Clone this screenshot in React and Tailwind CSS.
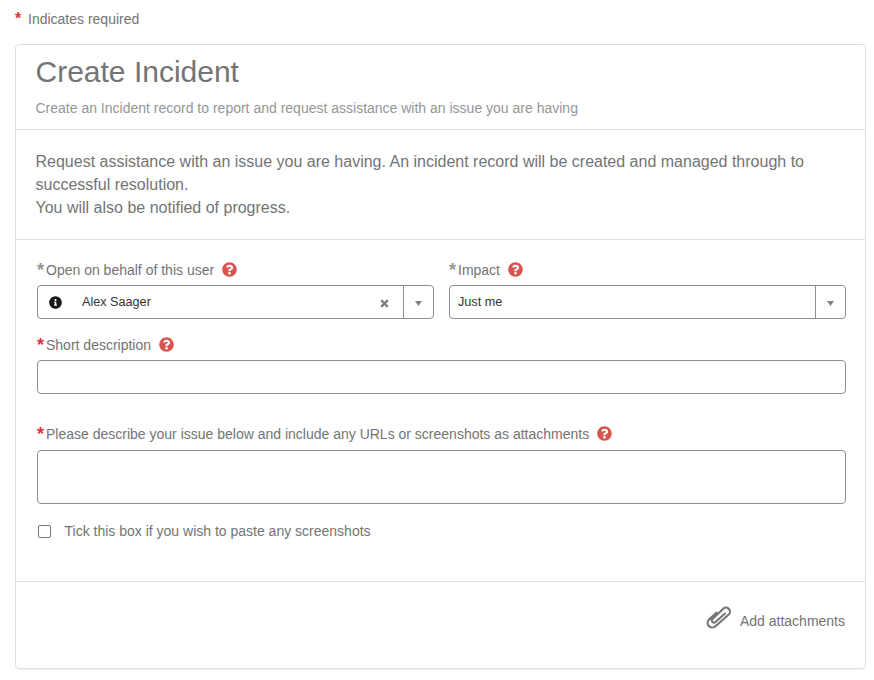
import React from 'react';
import { FaQuestionCircle, FaInfoCircle } from 'react-icons/fa';

function FieldLabel({ text, done }) {
    return (
        <div className="flex items-center h-[20px] text-[14px] text-[#747474]">
            <span className={`w-[9px] text-[18px] font-bold leading-[18px] h-[18px] ${done ? 'text-[#969696]' : 'text-[#d9363e]'}`}>*</span>
            <span>{text}</span>
            <FaQuestionCircle className="ml-[8px] text-[#d9534f] text-[15px] -translate-y-px" />
        </div>
    );
}

function SelectBox({ children, clear }) {
    return (
        <div className="flex h-[34px] border border-[#8e8e8e] rounded-[4px] text-[12.65px] text-[#333] bg-white">
            <div className="flex-1 flex items-center min-w-0">{children}</div>
            {clear && (
                <svg viewBox="0 0 9 9" className="self-center mr-[14px] w-[9px] h-[9px] translate-y-px">
                    <path d="M1.2 1.2 L7.8 7.8 M7.8 1.2 L1.2 7.8" stroke="#808080" strokeWidth="2.4" fill="none" />
                </svg>
            )}
            <div className="w-[30px] border-l border-[#8e8e8e] flex items-center justify-center">
                <svg viewBox="0 0 7 5" className="w-[7px] h-[5px] translate-y-px">
                    <polygon points="0,0 7,0 3.5,5" fill="#808080" />
                </svg>
            </div>
        </div>
    );
}

export default function App() {
    return (
        <div className="w-[874px] h-[680px] bg-white font-['Liberation_Sans',Arial,sans-serif] overflow-hidden">
            <div className="h-[44px] pl-[15px] pt-[11px] flex items-start text-[14px] text-[#747474]">
                <span className="w-[13px] text-[#d9363e] font-bold text-[16px] leading-[16px]">*</span>
                <span className="leading-[16px]">Indicates required</span>
            </div>

            <div className="mx-[15px] w-[851px] h-[625px] border border-[#dddddd] rounded-[4px] shadow-[0_1px_1px_rgba(0,0,0,0.05)]">
                <div className="h-[85px] pl-[19.5px] pr-[20px] border-b border-[#e2e2e2]">
                    <h1 className="pt-[8px] text-[30px] leading-[38px] text-[#747474]">Create Incident</h1>
                    <p className="mt-[7px] text-[14px] leading-[20px] text-[#969696]">
                        Create an Incident record to report and request assistance with an issue you are having
                    </p>
                </div>

                <div className="h-[110px] pl-[19.5px] pr-[20px] pt-[20px] border-b border-[#e2e2e2] text-[16px] leading-[23px] text-[#747474]">
                    Request assistance with an issue you are having. An incident record will be created and managed through to successful resolution.
                    <br />
                    You will also be notified of progress.
                </div>

                <div className="h-[342px] pl-[21px] pr-[19px] pt-[20px] border-b border-[#e2e2e2]">
                    <div className="flex gap-[15px]">
                        <div className="w-[397px]">
                            <FieldLabel text="Open on behalf of this user" done />
                            <div className="mt-[5px]">
                                <SelectBox clear>
                                    <FaInfoCircle className="ml-[11px] text-[13px] text-[#1a1a1a]" />
                                    <span className="ml-[20px]">Alex Saager</span>
                                </SelectBox>
                            </div>
                        </div>
                        <div className="w-[397px]">
                            <FieldLabel text="Impact" done />
                            <div className="mt-[5px]">
                                <SelectBox>
                                    <span className="ml-[8px]">Just me</span>
                                </SelectBox>
                            </div>
                        </div>
                    </div>

                    <div className="mt-[16px]">
                        <FieldLabel text="Short description" />
                        <div className="mt-[5px] h-[34px] border border-[#8e8e8e] rounded-[4px]" />
                    </div>

                    <div className="mt-[30px]">
                        <FieldLabel text="Please describe your issue below and include any URLs or screenshots as attachments" />
                        <div className="mt-[6px] h-[54px] border border-[#8e8e8e] rounded-[4px]" />
                    </div>

                    <label className="mt-[17px] flex items-center text-[14px] text-[#747474]">
                        <input type="checkbox" className="ml-[1px] w-[13px] h-[13px] appearance-none border border-[#767676] rounded-[2px] bg-white" />
                        <span className="ml-[13.5px]">Tick this box if you wish to paste any screenshots</span>
                    </label>
                </div>

                <div className="pr-[20px] pt-[22px] flex items-center justify-end text-[14px] text-[#747474]">
                    <svg viewBox="0 0 26 24" className="w-[26px] h-[24px] -translate-y-[1px]" fill="none" stroke="#767676" strokeWidth="2.1" strokeLinecap="round" strokeLinejoin="round">
                        <path d="M19 8.5 L9.5 17 a2.1 2.1 0 0 1 -3 -3 L17 4 a3.9 3.9 0 0 1 6 5.2 L9.5 21.3 a4.7 4.7 0 0 1 -7 -6.2 L10.5 7.5" />
                    </svg>
                    <span className="ml-[8px] mt-[7px]">Add attachments</span>
                </div>
            </div>
        </div>
    );
}
